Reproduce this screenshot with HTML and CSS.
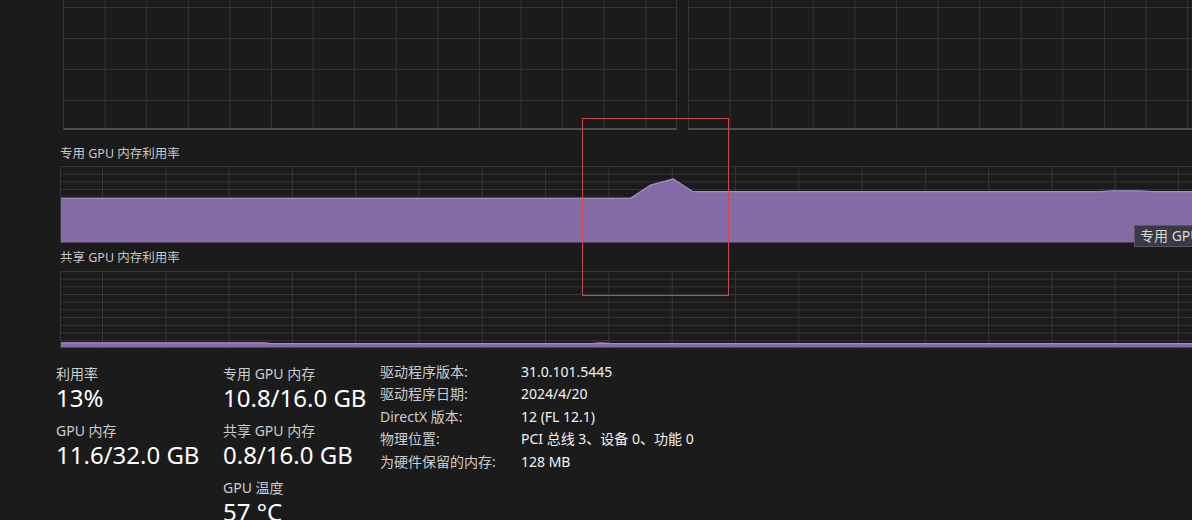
FILE: index.html
```html
<!DOCTYPE html>
<html lang="zh-CN">
<head>
    <meta charset="UTF-8">
    <meta name="viewport" content="width=device-width, initial-scale=1.0">
    <title>GPU 性能</title>
    <link rel="stylesheet" href="styles.css">
</head>
<body>
    <div class="page">
        <div class="engine-row">
            <div class="chart chart-engine chart-engine-left"></div>
            <div class="chart chart-engine chart-engine-right"></div>
        </div>

        <div class="chart-label chart-label-first">专用 GPU 内存利用率</div>
        <div class="chart chart-mem">
            <svg class="chart-svg" viewBox="0 0 1132 77" preserveAspectRatio="none">
                <polygon class="area" points="0,32.3 570,32.3 590,19.2 612.7,13 632.7,25.7 1040,25.7 1052,24.8 1080,24.8 1092,25.7 1132,25.7 1132,76.4 0,76.4"/>
                <polyline class="area-line" points="0,32.3 570,32.3 590,19.2 612.7,13 632.7,25.7 1040,25.7 1052,24.8 1080,24.8 1092,25.7 1132,25.7"/>
            </svg>
        </div>

        <div class="chart-label">共享 GPU 内存利用率</div>
        <div class="chart chart-mem">
            <svg class="chart-svg" viewBox="0 0 1132 77" preserveAspectRatio="none">
                <polygon class="area" points="0,71.8 205,71.8 210,72.6 530,72.6 540,72 552,72.6 760,72.6 1132,72.6 1132,76.4 0,76.4"/>
                <polyline class="area-line" points="0,71.8 205,71.8 210,72.6 530,72.6 540,72 552,72.6 760,72.6 1132,72.6"/>
            </svg>
        </div>

        <div class="stats">
            <div class="stat-col stat-col-1">
                <div class="stat">
                    <div class="stat-label">利用率</div>
                    <div class="stat-value">13%</div>
                </div>
                <div class="stat">
                    <div class="stat-label">GPU 内存</div>
                    <div class="stat-value">11.6/32.0 GB</div>
                </div>
            </div>
            <div class="stat-col stat-col-2">
                <div class="stat">
                    <div class="stat-label">专用 GPU 内存</div>
                    <div class="stat-value">10.8/16.0 GB</div>
                </div>
                <div class="stat">
                    <div class="stat-label">共享 GPU 内存</div>
                    <div class="stat-value">0.8/16.0 GB</div>
                </div>
                <div class="stat">
                    <div class="stat-label">GPU 温度</div>
                    <div class="stat-value">57 °C</div>
                </div>
            </div>
            <dl class="info">
                <dt>驱动程序版本:</dt>
                <dd>31.0.101.5445</dd>
                <dt>驱动程序日期:</dt>
                <dd>2024/4/20</dd>
                <dt>DirectX 版本:</dt>
                <dd>12 (FL 12.1)</dd>
                <dt>物理位置:</dt>
                <dd>PCI 总线 3、设备 0、功能 0</dd>
                <dt>为硬件保留的内存:</dt>
                <dd>128 MB</dd>
            </dl>
        </div>

        <div class="tooltip">专用 GPU</div>
        <div class="selection"></div>
    </div>
</body>
</html>
```

FILE: styles.css
```css
html, body {
    margin: 0;
    background-color: #1b1b1b;
    overflow: hidden;
}

body {
    font-family: "Noto Sans", "Noto Sans CJK SC", sans-serif;
    color: #cccccc;
}

.page {
    position: relative;
    width: 1192px;
    height: 520px;
    padding-left: 60px;
    box-sizing: border-box;
    overflow: hidden;
}

/* engine graphs at the top (scrolled, only the bottom part shows) */
.engine-row {
    display: flex;
    gap: 11px;
    padding-left: 3px;
}

.chart-engine {
    height: 128px;
    border-left: 1px solid #343434;
    border-bottom: 2px solid #524a5a;
    background-image:
        linear-gradient(to right, #343434 1px, transparent 1px),
        linear-gradient(to bottom, #343434 1px, transparent 1px);
    background-size: 41.6px 100%, 100% 31px;
    background-position: -1px 0, 0 7px;
}

.chart-engine-left {
    width: 612px;
    border-right: 1px solid #343434;
}

.chart-engine-right {
    flex: 1;
}

/* memory graphs */
.chart-label {
    font-size: 12.5px;
    line-height: 18px;
    margin-top: 6px;
    margin-bottom: 4px;
    color: #c8c8c8;
}

.chart-label-first {
    margin-top: 15px;
    margin-bottom: 3px;
}

.chart-mem {
    height: 77px;
    box-sizing: border-box;
    border-left: 1px solid #363636;
    background-image:
        linear-gradient(to right, #363636 1px, transparent 1px),
        linear-gradient(to bottom, #363636 1px, transparent 1px);
    background-size: 63.3px 100%, 100% 7.7px;
    background-position: 41px 0, 0 0;
}

.chart-svg {
    display: block;
    width: 100%;
    height: 100%;
}

.area {
    fill: rgba(136, 110, 170, 0.97);
}

.area-line {
    fill: none;
    stroke: #a08bc6;
    stroke-width: 1.3;
}

/* numbers under the graphs */
.stats {
    display: flex;
    align-items: flex-start;
    padding-top: 16px;
    margin-left: -4px;
}

.stat-col-1 {
    width: 167px;
}

.stat-col-2 {
    width: 157px;
}

.stat {
    margin-bottom: 9px;
}

.stat-label {
    font-size: 14px;
    line-height: 19px;
    color: #cccccc;
}

.stat-value {
    font-size: 24px;
    line-height: 29px;
    color: #ffffff;
}

.info {
    display: grid;
    grid-template-columns: 141px auto;
    align-content: start;
    margin: -3.5px 0 0;
    line-height: 22.5px;
}

.info dt {
    font-size: 14px;
    color: #cccccc;
}

.info dd {
    margin: 0;
    font-size: 14px;
    color: #f2f2f2;
}

/* overlays */
.tooltip {
    position: absolute;
    left: 1134px;
    top: 225px;
    height: 20px;
    padding: 0 5px;
    background-color: #3b3943;
    border: 1px solid #5b5763;
    font-size: 14px;
    line-height: 20px;
    color: #d8d8d8;
    white-space: nowrap;
}

.selection {
    position: absolute;
    left: 582px;
    top: 118px;
    width: 145px;
    height: 176px;
    border: 1px solid #c9484a;
}
```
